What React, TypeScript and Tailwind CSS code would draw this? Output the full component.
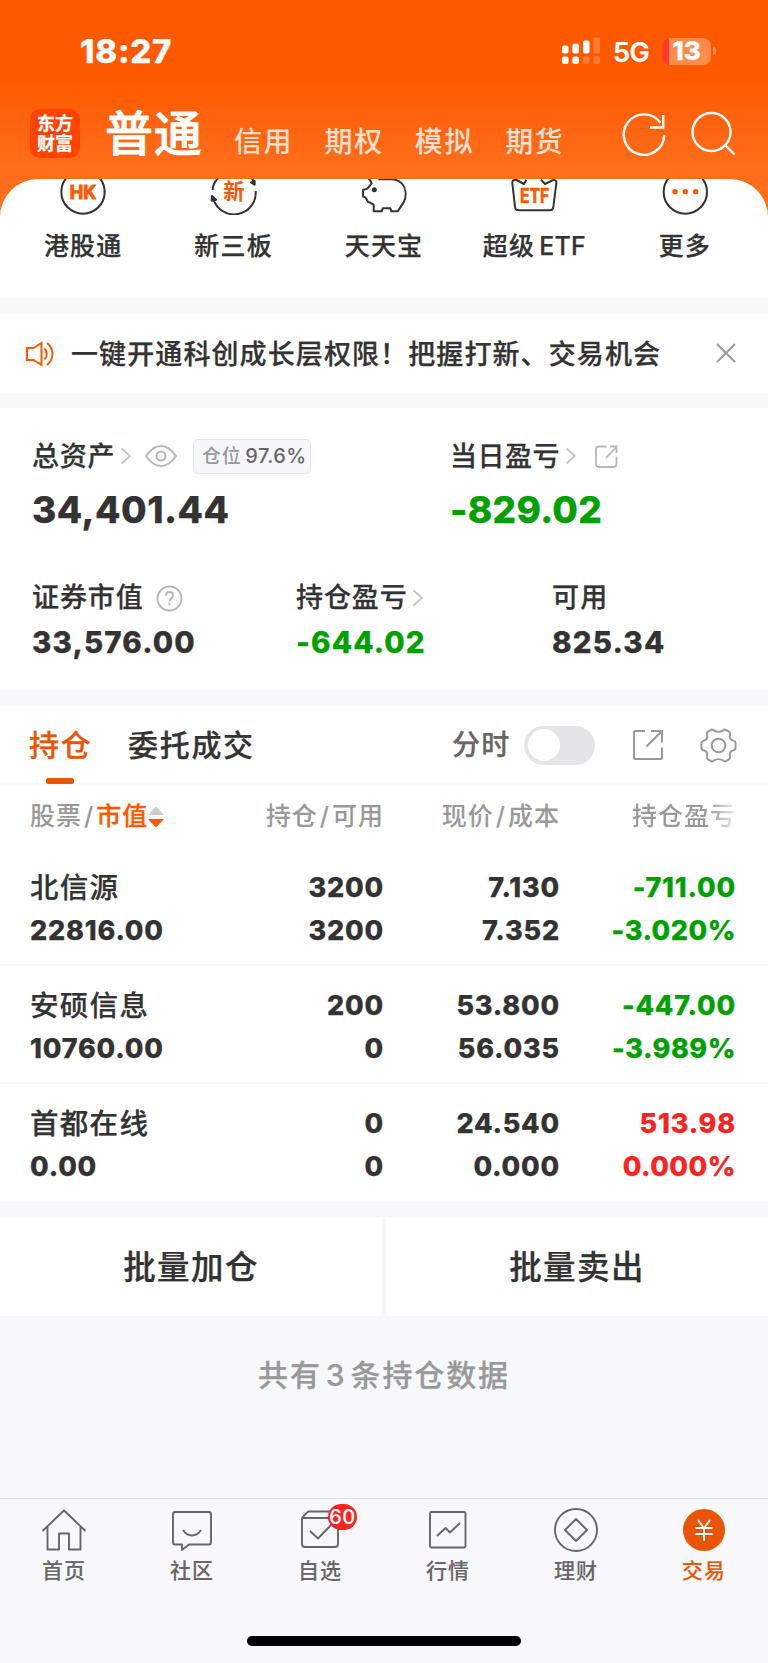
import type { ReactNode } from 'react';
import clsx from 'clsx';

// ─── Data ─────────────────────────────────────────────────────────────────────

interface Holding {
  name: string;
  value: string;
  amount: string;
  available: string;
  price: string;
  cost: string;
  profit: string;
  percent: string;
  up?: boolean;
}

const HOLDINGS: Holding[] = [
  { name: '北信源', value: '22816.00', amount: '3200', available: '3200', price: '7.130', cost: '7.352', profit: '-711.00', percent: '-3.020%' },
  { name: '安硕信息', value: '10760.00', amount: '200', available: '0', price: '53.800', cost: '56.035', profit: '-447.00', percent: '-3.989%' },
  { name: '首都在线', value: '0.00', amount: '0', available: '0', price: '24.540', cost: '0.000', profit: '513.98', percent: '0.000%', up: true },
];

const ACCOUNTS = ['信用', '期权', '模拟', '期货'];

// ─── Small icons ──────────────────────────────────────────────────────────────

function Chevron({ className }: { className?: string }) {
  return (
    <svg className={clsx('shrink-0', className)} width="12" height="18" viewBox="0 0 12 18" fill="none" stroke="#c4c4c4" strokeWidth="1.7">
      <path d="M1.5 1.5 10 9l-8.5 7.5" />
    </svg>
  );
}

function Signal() {
  return (
    <svg width="40" height="28" viewBox="0 0 40 28" fill="#fff">
      <rect x="0" y="8.5" width="6.5" height="8" rx="2" />
      <rect x="10.4" y="6.5" width="6.5" height="10" rx="2" />
      <rect x="21" y="3.5" width="6.5" height="13" rx="2" />
      <rect x="31.5" y="0.5" width="6.5" height="16" rx="2" opacity=".2" />
      <rect x="0" y="19.5" width="6.5" height="7.5" rx="2" />
      <rect x="10.4" y="19.5" width="6.5" height="7.5" rx="2" />
      <rect x="21" y="19.5" width="6.5" height="7.5" rx="2" opacity=".2" />
      <rect x="31.5" y="19.5" width="6.5" height="7.5" rx="2" opacity=".2" />
    </svg>
  );
}

// ─── Header ───────────────────────────────────────────────────────────────────

function Header() {
  return (
    <header className="h-[179px] bg-linear-to-b from-[#ff5900] from-45% to-[#ff6e1a] to-95% text-white">
      <div className="flex h-[102px] items-center pl-[80px]">
        <span className="w-[482px] pt-px text-[33px] leading-none font-extrabold tracking-[0.7px]">18:27</span>
        <Signal />
        <span className="ml-[11px] w-[49px] pt-[2px] text-[27px] leading-none font-semibold tracking-[-0.5px]">5G</span>
        <div className="flex h-[27px] w-[49px] items-center justify-center rounded-[8px] bg-linear-to-r from-[#ff3b30] from-[7px] to-[#ff8b4d] to-[7px] text-[26px] leading-none font-extrabold">
          13
        </div>
        <div className="ml-[2px] h-[8px] w-[3px] rounded-r-full bg-white/35" />
      </div>

      <div className="flex items-start pl-[30px]">
        <div className="mt-[7px] flex h-[49px] w-[50px] flex-col items-center justify-center rounded-[10px] bg-[#ff4400] text-[18px] leading-[20px] font-bold">
          <span>东方</span>
          <span>财富</span>
        </div>
        <h1 className="mt-[7px] ml-[25px] w-[129px] text-[48px] leading-[50px] font-medium tracking-[0.8px] [-webkit-text-stroke:0.8px]">普通</h1>
        <nav className="mt-[25px] flex w-[388px] gap-[31.2px] text-[28px] leading-[30px] font-medium tracking-[1.6px] text-[#ffe0d0] [-webkit-text-stroke:0px]">
          {ACCOUNTS.map(a => <span key={a}>{a}</span>)}
        </nav>
        <svg className="mt-[10px]" width="48" height="48" viewBox="0 0 48 48" fill="none" stroke="#fff" strokeWidth="2.4">
          <path d="M42.2 23.2A20.2 20.2 0 1 1 38.4 10.8" />
          <path d="M41.2 3v12.5H28" />
        </svg>
        <svg className="ml-[20px] mt-[9px]" width="46" height="48" viewBox="0 0 46 48" fill="none" stroke="#fff" strokeWidth="2.4">
          <circle cx="21.5" cy="21" r="19" />
          <path d="M35 34l9.5 9.5" />
        </svg>
      </div>
    </header>
  );
}

// ─── Shortcuts ────────────────────────────────────────────────────────────────

function Shortcut({ label, children }: { label: ReactNode; children: ReactNode }) {
  return (
    <div className="flex flex-1 flex-col items-center">
      <svg width="48" height="36" viewBox="0 0 144 108" fill="none" stroke="#333" strokeWidth="6" strokeLinejoin="round">
        {children}
      </svg>
      <span className="mt-[16px] text-[25px] leading-[30px] font-medium tracking-[1.2px] text-[#333]">{label}</span>
    </div>
  );
}

function Shortcuts() {
  return (
    <div className="bg-[#ff6e1a]">
      <div className="flex h-[119px] overflow-hidden rounded-t-[38px] bg-white px-2">
        <Shortcut label="港股通">
          <circle cx="72" cy="39" r="65" />
          <text x="72" y="60" textAnchor="middle" fontSize="57" fontWeight="700" fill="#ff5900" stroke="#ff5900" strokeWidth="3" textLength="80" lengthAdjust="spacingAndGlyphs">HK</text>
        </Shortcut>
        <Shortcut label="新三板">
          <path d="M8 33Q8 12 28-6M10 60A65 65 0 0 0 137 36M124-4l8 12" />
          <path d="M6 51l12 11-13 3zM134 17l-11-7 11-5z" fill="#333" />
          <text x="72" y="61" textAnchor="middle" fontSize="64" fontWeight="700" fill="#ff5900" stroke="none">新</text>
        </Shortcut>
        <Shortcut label="天天宝">
          <path d="M26-2 35 13 22 29 9 33V52L17 56 24 68 41 77V97H65L68 88H91L94 97H113L131 70C140 52 139 30 126 14 116 4 106 1 94 1H55" />
          <circle cx="43" cy="32" r="7.5" fill="#333" stroke="none" />
        </Shortcut>
        <Shortcut label={<>超级<span className="ml-[4px] tracking-[0.2px]">ETF</span></>}>
          <path d="M49 2 42 15 20 3Q6 1 7 12L15 84Q16 94 26 94H119Q129 94 130 84L139 12Q140 1 127 4L105 15 93 2" />
          <text x="74" y="72" textAnchor="middle" fontSize="61" fontWeight="700" fill="#ff5900" stroke="#ff5900" strokeWidth="2" textLength="88" lengthAdjust="spacingAndGlyphs">ETF</text>
        </Shortcut>
        <Shortcut label="更多">
          <circle cx="73" cy="39" r="65" />
          <g fill="#ff5900" stroke="none">
            <circle cx="42" cy="38" r="8" />
            <circle cx="73" cy="38" r="8" />
            <circle cx="104" cy="38" r="8" />
          </g>
        </Shortcut>
      </div>
    </div>
  );
}

// ─── Notice ───────────────────────────────────────────────────────────────────

function Notice() {
  return (
    <div className="mt-4 flex h-[79px] items-center bg-white pl-[26px]">
      <svg width="28" height="26" viewBox="0 0 28 26" fill="none" stroke="#ff5900" strokeWidth="2">
        <path d="M1 7h6.5l8-5v22l-8-5H1z" />
        <path d="M18.5 7.5a8 8 0 0 1 0 11M21 2q5.5 4.5 5.5 11T21 24" />
      </svg>
      <p className="ml-[17px] w-[645px] pt-px text-[27px] leading-none font-medium tracking-[1.1px] text-[#333]">
        一键开通科创成长层权限！把握打新、交易机会
      </p>
      <svg className="-mt-px" width="20" height="20" viewBox="0 0 20 20" stroke="#999" strokeWidth="2">
        <path d="M1 1l18 18M19 1 1 19" />
      </svg>
    </div>
  );
}

// ─── Assets ───────────────────────────────────────────────────────────────────

function Assets() {
  return (
    <section className="mt-[15px] h-[282px] bg-white pl-[32px] text-[27px] font-medium tracking-[1.15px] text-[#333]">
      <div className="flex pt-[30px]">
        <div className="w-[418px]">
          <div className="flex h-[36px] items-center">
            <span className="pt-[2px] tracking-[0.7px]">总资产</span>
            <Chevron className="ml-[5px]" />
            <svg className="ml-[13px]" width="32" height="22" viewBox="0 0 32 22" fill="none" stroke="#b8b8b8" strokeWidth="2">
              <path d="M1 11Q8 1 16 1t15 10Q24 21 16 21T1 11Z" />
              <circle cx="16" cy="11" r="4.5" />
            </svg>
            <div className="ml-[16px] flex h-[35px] w-[118px] items-center rounded-[5px] border border-[#e4e5e9] bg-[#f6f7fa] pl-[8px] text-[19px] leading-none tracking-[0.6px] text-[#999] [-webkit-text-stroke:0px]">
              仓位<span className="ml-[4px] text-[20px] tracking-[0.4px] text-[#666]">97.6%</span>
            </div>
          </div>
          <div className="mt-[17px] text-[37px] leading-[38px] font-extrabold tracking-[0.5px]">34,401.44</div>
        </div>
        <div>
          <div className="flex h-[36px] items-center">
            <span className="pt-[2px] tracking-[0.5px]">当日盈亏</span>
            <Chevron className="ml-[5px]" />
            <svg className="ml-[18px]" width="23" height="23" viewBox="0 0 23 23" fill="none" stroke="#b8b8b8" strokeWidth="1.8">
              <path d="M11.5 1.5H4Q1 1.5 1 4.5V19q0 3 3 3h14.500q3 0 3-3v-7.500" />
              <path d="M11 13 21.500 2M15 1.500h6.500V8" />
            </svg>
          </div>
          <div className="mt-[17px] text-[37px] leading-[38px] font-extrabold tracking-[0.3px] text-[#00a000]">-829.02</div>
        </div>
      </div>

      <div className="mt-[51px] flex">
        <div className="w-[264px]">
          <div className="flex h-[36px] items-center">
            <span className="pt-px tracking-[0.9px]">证券市值</span>
            <svg className="ml-[12px]" width="27" height="27" viewBox="0 0 27 27" fill="none" stroke="#b8b8b8" strokeWidth="1.9">
              <circle cx="13.5" cy="13.5" r="12" />
              <path d="M10 11q0-4 3.500-4t3.500 3.500c0 3-3.500 3-3.500 6M13.500 18v2.500" />
            </svg>
          </div>
          <div className="mt-[11px] text-[29.5px] leading-[30px] font-extrabold">33,576.00</div>
        </div>
        <div className="w-[256px]">
          <div className="flex h-[36px] items-center">
            <span className="pt-px tracking-[0.9px]">持仓盈亏</span>
            <Chevron className="ml-[4px]" />
          </div>
          <div className="mt-[11px] text-[29.5px] leading-[30px] font-extrabold text-[#00a000]">-644.02</div>
        </div>
        <div>
          <div className="flex h-[36px] items-center pt-px">可用</div>
          <div className="mt-[11px] text-[29.5px] leading-[30px] font-extrabold">825.34</div>
        </div>
      </div>
    </section>
  );
}

// ─── Holdings ─────────────────────────────────────────────────────────────────

function Tabs() {
  return (
    <div className="flex h-[79px] items-center border-b-2 border-[#f8f8fa] pl-[29px] text-[30px] leading-none font-medium tracking-[1.7px] text-[#333]">
      <div className="relative flex h-full w-[99px] items-center pt-px text-[#ea5504]">
        持仓
        <div className="absolute bottom-[-1px] left-[17px] h-[6px] w-[28px] rounded-[2px] bg-[#ea5504]" />
      </div>
      <span className="w-[324px] pt-px">委托成交</span>
      <span className="w-[72px] pt-px text-[28px] tracking-[1.2px] text-[#666]">分时</span>
      <div className="mt-[1px] flex h-[39px] w-[71px] items-center rounded-full bg-[#e5e5e7] pl-[4px]">
        <div className="size-[32px] rounded-full bg-white" />
      </div>
      <svg className="ml-[37px]" width="32" height="32" viewBox="0 0 32 32" fill="none" stroke="#999" strokeWidth="2">
        <path d="M13 2H3.500Q2 2 2 3.500v25Q2 30 3.500 30h25q1.500 0 1.500-1.500V18.500" />
        <path d="M14.500 17.500 29.500 2.500M19 2h11v11.500" />
      </svg>
      <svg className="mt-px ml-[36px]" width="37" height="37" viewBox="0 0 38 38" fill="none" stroke="#999" strokeWidth="2" strokeLinejoin="round">
        <path d="M14 3.500Q19 6.500 24 3.500 25.500 2 27 3.200L30 5Q31.500 6 30.800 8 29.500 12.500 34 14 36.500 14.500 36.500 16.500V21.500Q36.500 23.500 34 24 29.500 25.500 30.800 30 31.500 32 30 33L27 34.800Q25.500 36 24 34.500 19 31.500 14 34.500 12.500 36 11 34.800L8 33Q6.500 32 7.200 30 8.500 25.500 4 24 1.500 23.500 1.500 21.500V16.500Q1.500 14.500 4 14 8.500 12.500 7.200 8 6.500 6 8 5L11 3.200Q12.500 2 14 3.500Z" />
        <circle cx="19" cy="19" r="7" />
      </svg>
    </div>
  );
}

function HoldingRow({ item }: { item: Holding }) {
  return (
    <div className="grid h-[118.2px] grid-cols-[190px_164px_176px_176px] content-start border-b-2 border-[#f8f8fa] pl-[30px] pt-[18px] text-right text-[27px] leading-[43px] font-extrabold tracking-[0.8px] text-[#333]">
      <span className="text-left text-[28.5px] font-medium tracking-[1.3px]">{item.name}</span>
      <span>{item.amount}</span>
      <span>{item.price}</span>
      <span className={item.up ? 'text-[#fa2323]' : 'text-[#00a000]'}>{item.profit}</span>
      <span className="text-left">{item.value}</span>
      <span>{item.available}</span>
      <span>{item.cost}</span>
      <span className={clsx('tracking-[0.5px]', item.up ? 'text-[#fa2323]' : 'text-[#00a000]')}>{item.percent}</span>
    </div>
  );
}

function Holdings() {
  return (
    <section className="mt-4 bg-white">
      <Tabs />
      <div className="grid h-[63px] grid-cols-[190px_164px_176px_176px] items-center pt-px pl-[30px] text-right text-[25px] font-medium tracking-[1px] text-[#999] [-webkit-text-stroke:0px]">
        <div className="flex items-center text-left">
          股票<span className="mx-[2px]">/</span><span className="text-[#ff5900] [-webkit-text-stroke:0.3px]">市值</span>
          <svg width="16" height="22" viewBox="0 0 16 22">
            <path d="M0 9 8 .5 16 9z" fill="#ccc" />
            <path d="M0 13h16l-8 8.500z" fill="#ff5900" />
          </svg>
        </div>
        <span>持仓<span className="mx-[2px]">/</span>可用</span>
        <span>现价<span className="mx-[2px]">/</span>成本</span>
        <span className="bg-linear-to-r from-[#999] from-84% to-[#eee] bg-clip-text text-transparent">持仓盈亏</span>
      </div>
      {HOLDINGS.map(h => <HoldingRow key={h.name} item={h} />)}
    </section>
  );
}

// ─── Bottom bar ───────────────────────────────────────────────────────────────

function NavItem({ label, active, badge, children }: { label: string; active?: boolean; badge?: string; children: ReactNode }) {
  return (
    <div className={clsx('flex flex-1 flex-col items-center [-webkit-text-stroke:0.1px]', active ? 'text-[#ea5504]' : 'text-[#666]')}>
      <div className="relative">
        <svg width="48" height="48" viewBox="0 0 48 48" fill="none" stroke="currentColor" strokeWidth="1.9" strokeLinejoin="round">
          {children}
        </svg>
        {badge && (
          <span className="absolute left-[32px] top-[-1px] flex h-[26px] w-[29px] items-center justify-center rounded-full bg-[#fa2323] text-[20px] leading-none font-medium tracking-[0.6px] text-white">
            {badge}
          </span>
        )}
      </div>
      <span className="mt-[6px] text-[21px] leading-[24px] font-medium tracking-[1px]">{label}</span>
    </div>
  );
}

function BottomBar() {
  return (
    <footer className="flex h-[165px] flex-col items-center border-t border-[#dfdfe2] bg-[#f8f8fb]">
      <div className="flex h-[137px] w-full pt-[6px]">
        <NavItem label="首页">
          <path d="M2.500 26 24 5.500 45.500 26M7.500 22v22.500H19v-16h10v16h11.500V22" />
        </NavItem>
        <NavItem label="社区">
          <path d="M7 7h34q2 0 2 2V37.500q0 2-2 2H21l-7 5.500V39.500H7q-2 0-2-2V9q0-2 2-2Z" />
          <path d="M15 25q3.500 5.500 9 5.500t9-5.500" />
        </NavItem>
        <NavItem label="自选" badge="60">
          <path d="M6 13h34q2 0 2 2v24q0 3-3 3H9q-3 0-3-3zq5-6 6.500-6.500H40" />
          <path d="M14 26l8 7.500L36 19" />
        </NavItem>
        <NavItem label="行情">
          <rect x="6" y="7" width="35.500" height="35.500" rx="1.500" />
          <path d="M13 31l8.500-8 4.500 4.500 10-9.500" />
        </NavItem>
        <NavItem label="理财">
          <circle cx="24" cy="25" r="21" />
          <path d="M24 14 35 25 24 36 13 25z" />
        </NavItem>
        <NavItem label="交易" active>
          <circle cx="24" cy="25" r="21" fill="currentColor" stroke="none" />
          <path d="M18 15l6 8 6-8M24 23v13M15.500 23h17M15.500 29h17" stroke="#fff" />
        </NavItem>
      </div>
      <div className="h-[10px] w-[274px] rounded-full bg-black" />
    </footer>
  );
}

// ─── App ──────────────────────────────────────────────────────────────────────

export default function App() {
  return (
    <div className="flex h-[1663px] w-[768px] flex-col overflow-hidden bg-[#f7f8fa] font-['Inter','Noto_Sans_CJK_SC',sans-serif] [-webkit-text-stroke:0.25px]">
      <Header />
      <Shortcuts />
      <Notice />
      <Assets />
      <Holdings />
      <div className="mt-[14px] flex h-[99px] gap-[4px] text-[32.5px] font-medium tracking-[1.4px] text-[#333]">
        <button className="flex-1 bg-white pt-[5px]">批量加仓</button>
        <button className="flex-1 bg-white pt-[5px]">批量卖出</button>
      </div>
      <p className="mt-[40px] text-center text-[30px] leading-[38px] font-medium tracking-[1.9px] text-[#999]">
        共有<span className="mx-[4px]">3</span>条持仓数据
      </p>
      <div className="flex-1" />
      <BottomBar />
    </div>
  );
}
